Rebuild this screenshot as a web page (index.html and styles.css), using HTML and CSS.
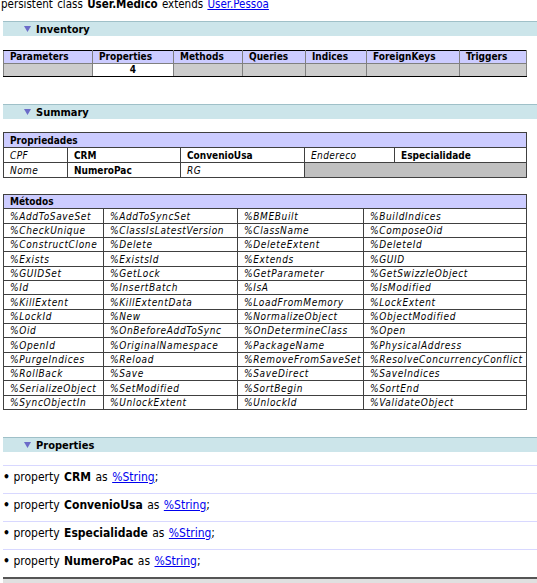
FILE: index.html
```html
<!DOCTYPE html>
<html>
<head>
<meta charset="utf-8">
<link rel="stylesheet" href="styles.css">
</head>
<body>
<div class="classline">persistent class <b>User.Medico</b> extends <a href="#">User.Pessoa</a></div>

<div class="bar bar-inv"><span class="tri"><svg width="7" height="6" viewBox="0 0 7 6"><polygon points="0,0 7,0 3.5,6" fill="#6b6bc8"/></svg></span><span class="bartitle">Inventory</span></div>

<table class="grid inv">
<colgroup><col><col><col><col><col><col><col></colgroup>
<tr class="hd"><th>Parameters</th><th>Properties</th><th>Methods</th><th>Queries</th><th>Indices</th><th>ForeignKeys</th><th>Triggers</th></tr>
<tr class="gray"><td></td><td class="white">4</td><td></td><td></td><td></td><td></td><td></td></tr>
</table>

<div class="bar bar-sum"><span class="tri"><svg width="7" height="6" viewBox="0 0 7 6"><polygon points="0,0 7,0 3.5,6" fill="#6b6bc8"/></svg></span><span class="bartitle">Summary</span></div>

<table class="grid props">
<colgroup><col><col><col><col><col></colgroup>
<tr class="hd"><th colspan="5">Propriedades</th></tr>
<tr><td class="i">CPF</td><td class="b">CRM</td><td class="b">ConvenioUsa</td><td class="i">Endereco</td><td class="b">Especialidade</td></tr>
<tr><td class="i">Nome</td><td class="b">NumeroPac</td><td class="i">RG</td><td class="empty" colspan="2"></td></tr>
</table>

<table class="grid meths">
<colgroup><col><col><col><col></colgroup>
<tr class="hd"><th colspan="4">Métodos</th></tr>
<tr><td>%AddToSaveSet</td><td>%AddToSyncSet</td><td>%BMEBuilt</td><td>%BuildIndices</td></tr>
<tr><td>%CheckUnique</td><td>%ClassIsLatestVersion</td><td>%ClassName</td><td>%ComposeOid</td></tr>
<tr><td>%ConstructClone</td><td>%Delete</td><td>%DeleteExtent</td><td>%DeleteId</td></tr>
<tr><td>%Exists</td><td>%ExistsId</td><td>%Extends</td><td>%GUID</td></tr>
<tr><td>%GUIDSet</td><td>%GetLock</td><td>%GetParameter</td><td>%GetSwizzleObject</td></tr>
<tr><td>%Id</td><td>%InsertBatch</td><td>%IsA</td><td>%IsModified</td></tr>
<tr><td>%KillExtent</td><td>%KillExtentData</td><td>%LoadFromMemory</td><td>%LockExtent</td></tr>
<tr><td>%LockId</td><td>%New</td><td>%NormalizeObject</td><td>%ObjectModified</td></tr>
<tr><td>%Oid</td><td>%OnBeforeAddToSync</td><td>%OnDetermineClass</td><td>%Open</td></tr>
<tr><td>%OpenId</td><td>%OriginalNamespace</td><td>%PackageName</td><td>%PhysicalAddress</td></tr>
<tr><td>%PurgeIndices</td><td>%Reload</td><td>%RemoveFromSaveSet</td><td>%ResolveConcurrencyConflict</td></tr>
<tr><td>%RollBack</td><td>%Save</td><td>%SaveDirect</td><td>%SaveIndices</td></tr>
<tr><td>%SerializeObject</td><td>%SetModified</td><td>%SortBegin</td><td>%SortEnd</td></tr>
<tr><td>%SyncObjectIn</td><td>%UnlockExtent</td><td>%UnlockId</td><td>%ValidateObject</td></tr>
</table>

<div class="bar bar-prop"><span class="tri"><svg width="7" height="6" viewBox="0 0 7 6"><polygon points="0,0 7,0 3.5,6" fill="#6b6bc8"/></svg></span><span class="bartitle">Properties</span></div>

<ul class="plist">
<li><span class="dot">•</span> property <b>CRM</b> as <a href="#">%String</a>;</li>
<li><span class="dot">•</span> property <b>ConvenioUsa</b> as <a href="#">%String</a>;</li>
<li><span class="dot">•</span> property <b>Especialidade</b> as <a href="#">%String</a>;</li>
<li><span class="dot">•</span> property <b>NumeroPac</b> as <a href="#">%String</a>;</li>
</ul>
<div class="endrule"></div>
</body>
</html>
```

FILE: styles.css
```css
html, body {
  margin: 0;
  padding: 0;
  background: #ffffff;
  color: #000000;
  font-family: "DejaVu Sans Condensed", "DejaVu Sans", sans-serif;
  overflow: hidden;
}

a {
  color: #0000ee;
  text-decoration: underline;
}

.classline {
  font-size: 11.5px;
  line-height: 14px;
  margin-top: -3px;
  padding-left: 1px;
  word-spacing: 1px;
  white-space: nowrap;
}

.bar {
  margin-left: 3px;
  height: 14px;
  border-top: 1px solid #9fc0c8;
  background: #cce5ea;
  display: flex;
  align-items: center;
  font-size: 11px;
  font-weight: bold;
}
.bar-inv { margin-top: 10px; }
.bar-sum { margin-top: 27px; }
.bar-prop { margin-top: 27px; }

.tri {
  display: flex;
  margin-left: 21px;
  margin-right: 5px;
}

.grid {
  margin-left: 3px;
  width: 523px;
  table-layout: fixed;
  border-collapse: collapse;
  border: 1px solid #000;
  font-size: 10px;
}
.grid th, .grid td {
  padding: 0 0 0 6px;
  text-align: left;
  white-space: nowrap;
  overflow: hidden;
}
.grid .hd th {
  background: #ccccff;
  font-weight: bold;
}

/* inventory */
.inv { margin-top: 14px; }
.inv th, .inv td {
  height: 12px;
  line-height: 12px;
  border: 1px solid #808080;
}
.inv tr.hd th { border-top: 1px solid #000; }
.inv .gray td { background: #cccccc; border-bottom: 1px solid #000; }
.inv .gray td.white {
  background: #ffffff;
  text-align: center;
  font-weight: bold;
  padding: 0;
}
.inv col:nth-child(1) { width: 89px; }
.inv col:nth-child(2) { width: 81px; }
.inv col:nth-child(3) { width: 69px; }
.inv col:nth-child(4) { width: 63px; }
.inv col:nth-child(5) { width: 61px; }
.inv col:nth-child(6) { width: 93px; }
.inv col:nth-child(7) { width: 67px; }

/* propriedades */
.props { margin-top: 13px; }
.props th, .props td {
  height: 14px;
  line-height: 13px;
  border: 1px solid #404040;
}
.props td.i { font-style: italic; letter-spacing: 0.4px; }
.props td.b { font-weight: bold; }
.props td.empty { background: #c0c0c0; }
.props col:nth-child(1) { width: 64px; }
.props col:nth-child(2) { width: 113px; }
.props col:nth-child(3) { width: 124px; }
.props col:nth-child(4) { width: 90px; }
.props col:nth-child(5) { width: 132px; }

/* metodos */
.meths { margin-top: 16px; }
.meths th, .meths td {
  height: 13.35px;
  line-height: 13px;
  border: 1px solid #404040;
}
.meths td {
  font-style: italic;
  letter-spacing: 0.65px;
}
.meths col:nth-child(1) { width: 100px; }
.meths col:nth-child(2) { width: 134px; }
.meths col:nth-child(3) { width: 126px; }
.meths col:nth-child(4) { width: 163px; }

/* property list */
.plist {
  list-style: none;
  margin: 13px 0 0 3px;
  padding: 0;
  font-size: 12px;
  word-spacing: 1px;
}
.plist li {
  border-top: 1px solid #d8d8ff;
  height: 27px;
  line-height: 22px;
  white-space: nowrap;
}
.dot {
  display: inline-block;
  width: 6px;
  font-weight: bold;
}
.endrule {
  margin-left: 3px;
  border-top: 2px solid #555;
  height: 10px;
  background: #e0e0e0;
}
```
